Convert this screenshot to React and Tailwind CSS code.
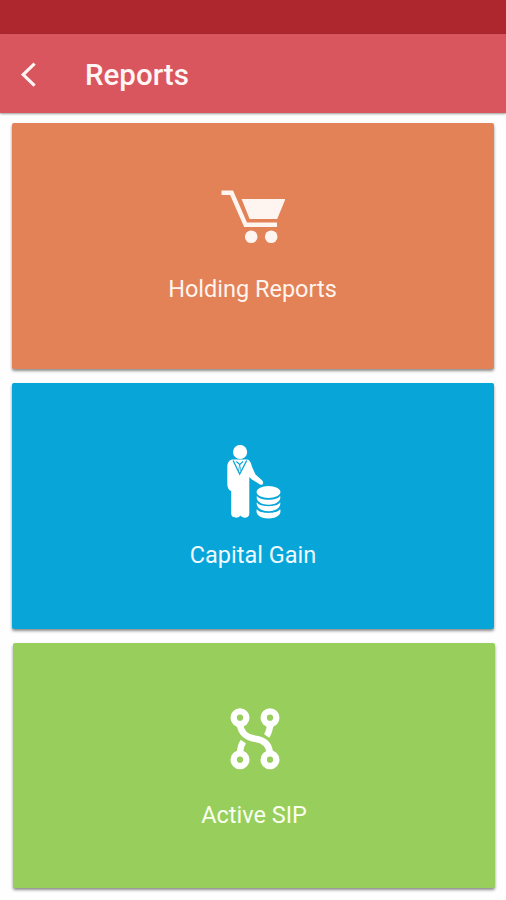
const BackIcon = () => (
  <svg width="16" height="26" viewBox="0 0 16 26" fill="none" stroke="currentColor" strokeWidth="3.1" aria-hidden="true">
    <path d="M13.6 1.6L2.2 12.6L13.6 23.6" />
  </svg>
);

const CartIcon = () => (
  <svg width="64" height="54" viewBox="0 0 64 54" fill="none" aria-hidden="true">
    <path d="M0.5 2.8H10.6L24.6 34.8H56" stroke="#fff5f0" strokeWidth="4.4" />
    <path d="M20.6 9H64.4L56.2 29H28.6Z" fill="#fff5f0" />
    <circle cx="30.2" cy="46.7" r="6.3" fill="#fff5f0" />
    <circle cx="50.2" cy="46.7" r="6.3" fill="#fff5f0" />
  </svg>
);

const InvestorIcon = () => (
  <svg width="56" height="74" viewBox="0 0 56 74" fill="white" aria-hidden="true">
    <circle cx="13.1" cy="7" r="7.1" />
    {/* Suit */}
    <path d="M5.5 14.5H20C23 15 24.1 18 25.1 22L28.5 29.5L35 35.2C37.5 37.5 35.7 40.8 33 39.4L24.5 34.2L22.3 32V69C22.3 73 16 74 13.3 70.5C11.6 74 4.2 73 4.2 69V46C1.3 45 0.3 42 0.3 39V22C0.3 18 2.1 15 5.5 14.5Z" />
    {/* Lapels and tie */}
    <path d="M6.1 15.5L12.7 29L19.7 15.5" fill="none" stroke="#08a5d8" strokeWidth="1.3" />
    <path d="M9.3 16.5L12.7 19.5L16.1 16.5" fill="none" stroke="#08a5d8" strokeWidth="1.1" />
    <path d="M12.7 19.5L11.5 26M12.7 19.5L13.9 26" fill="none" stroke="#08a5d8" strokeWidth="0.7" />
    {/* Coins */}
    <ellipse cx="41.5" cy="47" rx="11.9" ry="6.1" />
    <path d="M29.9 50.7C32.5 56 50.5 56 53.1 50.7C54.5 55.5 49.5 59.7 41.5 59.7S28.5 55.5 29.9 50.7Z" />
    <path d="M29.9 57.3C32.5 62.5 50.5 62.5 53.1 57.3C54.5 62 49.5 66.2 41.5 66.2S28.5 62 29.9 57.3Z" />
    <path d="M29.9 64C32.5 69.2 50.5 69.2 53.1 64C55 69 50.5 73.4 41.5 73.4S28 69 29.9 64Z" />
  </svg>
);

const NodesIcon = () => (
  <svg width="50" height="62" viewBox="0 0 50 62" fill="none" stroke="white" strokeWidth="6.4" aria-hidden="true">
    <circle cx="10" cy="9.7" r="6.3" />
    <circle cx="40" cy="9.7" r="6.3" />
    <circle cx="10" cy="51.7" r="6.3" />
    <circle cx="40" cy="51.7" r="6.3" />
    <path d="M10 16C10.5 24 16 29.6 25 30.7C34 31.8 39.5 37 40 46" />
    <path d="M40 16C40 21 39.3 24 36.6 27.8" />
    <path d="M10 46C10 40 10.7 37.4 13.4 33.6" />
  </svg>
);

const reports = [
  { title: 'Holding Reports', Icon: CartIcon, card: 'h-[246px] bg-[#e38157] pt-[67px]', label: 'mt-[29px] -ml-px text-[#fff5ee]' },
  { title: 'Capital Gain', Icon: InvestorIcon, card: 'h-[246px] bg-[#08a5d8] pt-[62px]', label: 'mt-5 text-[#eefaff]', icon: 'ml-[3px]' },
  { title: 'Active SIP', Icon: NodesIcon, card: 'h-[245px] bg-[#98ce5b] pt-[65px] ml-px -mr-px', label: 'mt-[29px] text-[#f8fff0]', icon: 'ml-px' },
];

const ReportCard = ({ title, Icon, card, label, icon = '' }) => (
  <button
    className={`flex flex-col items-center rounded-[2px] shadow-[0_2px_3px_rgba(0,0,0,0.45)] ${card}`}
  >
    <span className={icon}>
      <Icon />
    </span>
    <span className={`text-[23.5px] leading-8 ${label}`}>{title}</span>
  </button>
);

export default function App() {
  return (
    <div className="flex h-[900px] w-[506px] flex-col overflow-hidden bg-[#fefefe] font-['Roboto',sans-serif]">
      <div className="h-[34px] shrink-0 bg-[#ae272e]" />
      <header className="flex h-[79px] shrink-0 items-center bg-[#da565e] pl-[21px] pt-[2px] text-[#fff5f5] shadow-[0_1px_2px_rgba(0,0,0,0.4)]">
        <button aria-label="Back">
          <BackIcon />
        </button>
        <h1 className="ml-12 text-[29.5px] font-medium leading-9">Reports</h1>
      </header>
      <main className="flex flex-col gap-[14px] px-3 pt-[10px]">
        {reports.map((report) => (
          <ReportCard key={report.title} {...report} />
        ))}
      </main>
    </div>
  );
}
